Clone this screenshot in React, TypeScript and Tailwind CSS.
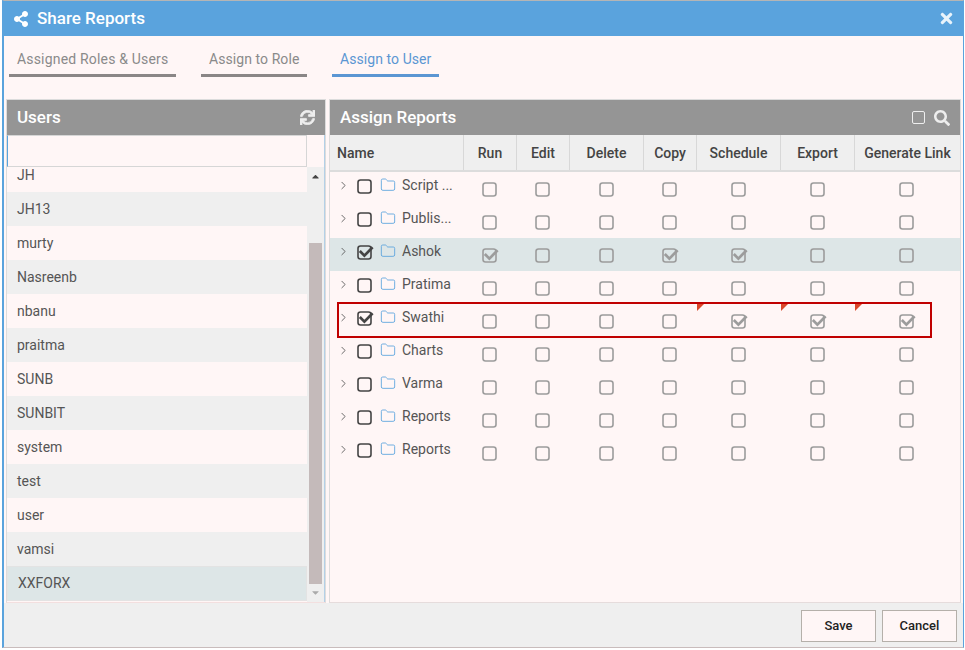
import React from 'react';
import { ChevronRight, Folder } from 'lucide-react';
import { FaShareAlt, FaTimes, FaSync, FaSearch, FaCaretUp, FaCaretDown } from 'react-icons/fa';

const users = ['JH13', 'murty', 'Nasreenb', 'nbanu', 'praitma', 'SUNB', 'SUNBIT', 'system', 'test', 'user', 'vamsi'];
const perms = ['Run', 'Edit', 'Delete', 'Copy', 'Schedule', 'Export', 'Generate Link'];

const reports = [
  { name: 'Script ...', checked: false, on: [] as number[] },
  { name: 'Publis...', checked: false, on: [] },
  { name: 'Ashok', checked: true, on: [0, 3, 4], active: true },
  { name: 'Pratima', checked: false, on: [] },
  { name: 'Swathi', checked: true, on: [4, 5, 6], flagged: true },
  { name: 'Charts', checked: false, on: [] },
  { name: 'Varma', checked: false, on: [] },
  { name: 'Reports', checked: false, on: [] },
  { name: 'Reports', checked: false, on: [] },
];

const cols = 'grid grid-cols-[134px_53px_53px_74px_53px_84px_74px_105px]';

function Check({ checked, dark }: { checked?: boolean; dark?: boolean }) {
  const color = dark ? '#444444' : '#9c9c9c';
  return (
    <svg width="15" height="15" viewBox="0 0 15 15" fill="none" className="block shrink-0 overflow-visible">
      <rect x="1" y="1" width="13" height="13" rx="2.5" stroke={color} strokeWidth="1.6" />
      {checked && <path d="M2.8 6 7.4 10.6 15.6 2.2" stroke={color} strokeWidth="2.7" />}
    </svg>
  );
}

export default function App() {
  return (
    <div className="w-[965px] h-[650px] bg-white font-['Roboto',sans-serif] overflow-hidden">
      <div className="w-[962px] h-[648px] ml-[2px] border-l-2 border-[#5aa3dd] border-t border-t-[#b5b5b5] border-r border-r-[#5aa3dd] border-b border-b-[#c9bcbc] bg-[#fff6f6] flex flex-col">
        <div className="h-[35px] shrink-0 bg-[#5aa3dd] text-white flex items-center pl-[9px] pr-[8px]">
          <FaShareAlt className="text-[16px]" />
          <span className="ml-[8px] text-[17px] font-medium">Share Reports</span>
          <FaTimes className="ml-auto text-[17px] text-[#e8f3fb]" />
        </div>

        <div className="h-[63px] shrink-0 flex pl-[5px] pt-[12px] text-[14px] leading-[20px]">
          <div className="w-[167px] h-[29px] px-[8px] pt-[1px] border-b-[3px] border-[#8a8686] text-[#8a8a8a] tracking-[0.18px] whitespace-nowrap">Assigned Roles &amp; Users</div>
          <div className="w-[106px] h-[29px] ml-[25px] px-[8px] pt-[1px] border-b-[3px] border-[#8a8686] text-[#8a8a8a] tracking-[0.07px] whitespace-nowrap">Assign to Role</div>
          <div className="w-[107px] h-[29px] ml-[25px] px-[8px] pt-[1px] border-b-[3px] border-[#5b96d3] text-[#5b96d3] tracking-[0.07px] whitespace-nowrap">Assign to User</div>
        </div>

        <div className="h-[504px] shrink-0 flex pl-[2px] gap-[3px]">
          <div className="w-[320px] flex flex-col border border-[#dcdcdc] border-b-[#f3dfdf]">
            <div className="h-[35px] shrink-0 bg-[#959595] text-white flex items-center pl-[10px] pr-[10px]">
              <span className="text-[17px] font-medium">Users</span>
              <FaSync className="ml-auto text-[15px] text-[#eeeeee]" stroke="currentColor" strokeWidth={24} />
            </div>
            <div className="flex-1 flex min-h-0">
              <div className="w-[300px] flex flex-col">
                <div className="h-[32px] shrink-0 border border-[#d6d6d6] border-l-[#5aa3dd] bg-[#fff6f6]" />
                <div className="h-[25px] shrink-0 pl-[10px] text-[14px] leading-[16px] text-[#555]">JH</div>
                {users.map((u, i) => (
                  <div key={u} className={`h-[34px] shrink-0 pl-[10px] flex items-center text-[14px] text-[#555] ${i % 2 === 0 ? 'bg-[#efefef]' : 'bg-[#fff6f6]'}`}>{u}</div>
                ))}
                <div className="h-[35px] shrink-0 pl-[10px] flex items-center text-[14px] text-[#555] bg-[#dde6e7] border border-[#e3e3e3]">XXFORX</div>
              </div>
              <div className="flex-1 bg-[#efefef] flex flex-col items-center border-r border-[#5aa3dd]/40">
                <div className="h-[32px] shrink-0 self-stretch bg-[#fff6f6]" />
                <FaCaretUp className="text-[11px] text-[#444] mt-[4px]" />
                <div className="w-[13px] h-[341px] mt-[61px] bg-[#c4baba]" />
                <FaCaretDown className="text-[11px] text-[#aaa] mt-[3px]" />
              </div>
            </div>
          </div>

          <div className="relative w-[632px] flex flex-col border border-[#dcdcdc] border-b-[#e6dcdc]">
            <div className="h-[35px] shrink-0 bg-[#959595] text-white flex items-center pl-[10px] pr-[10px]">
              <span className="text-[17px] font-medium">Assign Reports</span>
              <span className="ml-auto mb-[1px] w-[13px] h-[13px] rounded-[2px] border-[1.5px] border-[#eeeeee]" />
              <FaSearch className="ml-[9px] text-[16px] text-[#eeeeee]" />
            </div>

            <div className={`${cols} h-[37px] shrink-0 bg-[#efefef] border-b-2 border-[#dcdcdc] text-[14px] font-medium text-[#444]`}>
              <div className="flex items-center pt-[1px] pl-[7px] border-r border-[#d8d8d8]">Name</div>
              {perms.map((p) => (
                <div key={p} className="flex items-center justify-center pt-[1px] border-r border-[#d8d8d8] last:border-r-0">{p}</div>
              ))}
            </div>

            {reports.map((r, i) => (
              <div key={i} className={`${cols} h-[33px] shrink-0 ${r.active ? 'bg-[#dde6e7]' : ''}`}>
                <div className="flex items-start pt-[4px] pl-[7px] text-[14px] text-[#555]">
                  <ChevronRight size={13} strokeWidth={1.6} className="mt-[3px] text-[#555]" />
                  <span className="ml-[7px] mt-[3px]"><Check checked={r.checked} dark /></span>
                  <Folder size={16} strokeWidth={1.3} className="ml-[8px] mt-[1px] text-[#5aa3dd]" />
                  <span className="ml-[6px] leading-[18px]">{r.name}</span>
                </div>
                {perms.map((p, j) => (
                  <div key={p} className="relative flex justify-center pt-[10px] pr-[2px]">
                    {r.flagged && j >= 4 && j <= 6 && (
                      <span className="absolute left-0 top-[-1px] w-0 h-0 border-t-[8px] border-t-[#d9482b] border-r-[8px] border-r-transparent" />
                    )}
                    <Check checked={r.on.includes(j)} />
                  </div>
                ))}
              </div>
            ))}

            <div className="absolute left-[7px] top-[202px] w-[595px] h-[36px] border-2 border-[#c00000] pointer-events-none" />
          </div>
        </div>

        <div className="flex-1 bg-[#efefef] flex justify-end items-start gap-[6px] pt-[7px] pr-[6px]">
          <button className="w-[75px] h-[32px] bg-[#fff6f6] border border-[#b5b0aa] text-[13px] font-medium text-[#222]">Save</button>
          <button className="w-[75px] h-[32px] bg-[#fff6f6] border border-[#b5b0aa] text-[13px] font-medium text-[#222]">Cancel</button>
        </div>
      </div>
    </div>
  );
}
